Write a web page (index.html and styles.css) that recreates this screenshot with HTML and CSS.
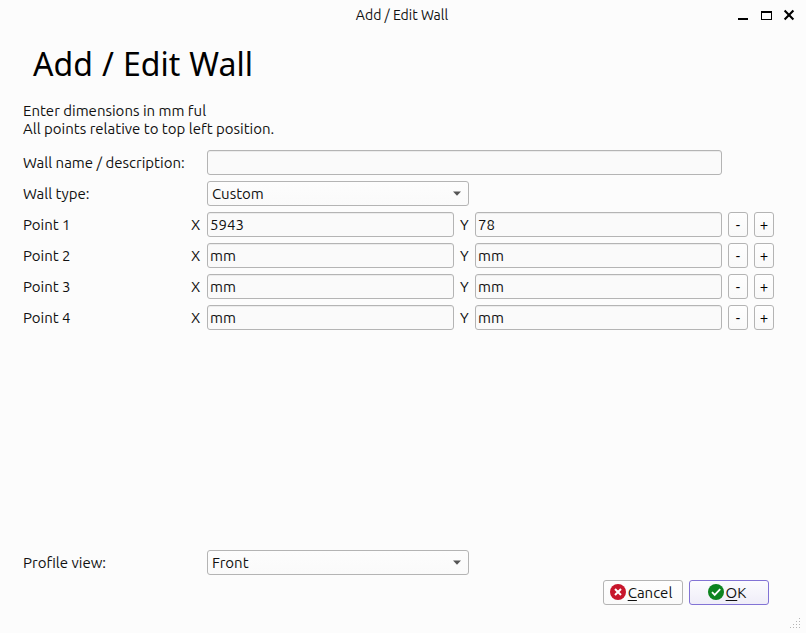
FILE: index.html
```html
<!DOCTYPE html>
<html lang="en">
<head>
<meta charset="utf-8">
<title>Add / Edit Wall</title>
<link rel="stylesheet" href="styles.css">
</head>
<body>
<div class="window">
  <header class="titlebar">
    <span class="caption">Add / Edit Wall</span>
    <svg class="controls" width="60" height="30" viewBox="0 0 60 30">
      <path d="M2 18h10v2H2z"/>
      <path fill-rule="evenodd" d="M25 11h11v9H25zM26 13v6h9v-6z"/>
      <path d="M48.6 10.6l8.8 8.8M57.4 10.6l-8.8 8.8" stroke="#000" stroke-width="2.1"/>
    </svg>
  </header>
  <h1 class="heading">Add / Edit Wall</h1>
  <div class="intro"><p>Enter dimensions in mm ful</p><p>All points relative to top left position.</p></div>
  <main class="form">
    <div class="row"><span class="label wide">Wall name / description:</span><div class="field long"></div></div>
    <div class="row"><span class="label wide">Wall type:</span><div class="combo"><span>Custom</span><svg class="arrow" width="8" height="5" viewBox="0 0 8 5"><path d="M0 .5h8L4 4.7z"/></svg></div></div>
    <div class="row"><span class="label">Point 1</span><span class="axis x">X</span><div class="field">5943</div><span class="axis y">Y</span><div class="field">78</div><button class="step">-</button><button class="step">+</button></div>
    <div class="row"><span class="label">Point 2</span><span class="axis x">X</span><div class="field">mm</div><span class="axis y">Y</span><div class="field">mm</div><button class="step">-</button><button class="step">+</button></div>
    <div class="row"><span class="label">Point 3</span><span class="axis x">X</span><div class="field">mm</div><span class="axis y">Y</span><div class="field">mm</div><button class="step">-</button><button class="step">+</button></div>
    <div class="row"><span class="label">Point 4</span><span class="axis x">X</span><div class="field">mm</div><span class="axis y">Y</span><div class="field">mm</div><button class="step">-</button><button class="step">+</button></div>
  </main>
  <div class="row profile"><span class="label wide">Profile view:</span><div class="combo"><span>Front</span><svg class="arrow" width="8" height="5" viewBox="0 0 8 5"><path d="M0 .5h8L4 4.7z"/></svg></div></div>
  <footer class="actions">
    <button class="action"><svg class="icon" width="16" height="16" viewBox="0 0 16 16"><circle cx="8" cy="8" r="8" fill="#c7162b"/><path d="M5 5l6 6M11 5l-6 6" stroke="#fff" stroke-width="2"/></svg><span><span class="key">C</span>ancel</span></button>
    <button class="action primary"><svg class="icon" width="16" height="16" viewBox="0 0 16 16"><circle cx="8" cy="8" r="8" fill="#0e8420"/><path d="M4 8.2l2.7 2.7L12.2 5.2" fill="none" stroke="#fff" stroke-width="1.8"/></svg><span><span class="key">O</span>K</span></button>
  </footer>
  <svg class="grip" width="11" height="11" viewBox="0 0 11 11"><path d="M9 0h1v1H9zM6 3h1v1H6zM9 3h1v1H9zM3 6h1v1H3zM6 6h1v1H6zM9 6h1v1H9zM0 9h1v1H0zM3 9h1v1H3zM6 9h1v1H6zM9 9h1v1H9z"/></svg>
</div>
</body>
</html>
```
FILE: styles.css
```css
* { box-sizing: border-box; }
body { margin: 0; background: #fcfcfc; color: #111; font: 15px/18px Ubuntu, "Noto Sans", sans-serif; }
.window { position: relative; width: 806px; height: 633px; display: flex; flex-direction: column; overflow: hidden; white-space: nowrap; }
.titlebar { height: 30px; display: grid; grid-template-columns: 1fr auto 1fr; align-items: center; }
.caption { grid-column: 2; font-size: 14px; margin-left: -2px; }
.controls { justify-self: end; margin-right: 10px; }
.heading { margin: 12px 0 0 33px; height: 44px; font: 400 32px/44px "Noto Sans", sans-serif; word-spacing: 0.8px; color: #000; }
.intro { margin: 16px 0 0 23px; }
.intro p { margin: 0; height: 18px; }
.form { display: flex; flex-direction: column; gap: 6px; margin-top: 12px; }
.row { display: flex; height: 25px; padding-left: 23px; align-items: center; }
.label { width: 168px; }
.label.wide { width: 184px; }
.axis.x { width: 16px; }
.axis.y { width: 21px; padding-left: 6px; }
.field, .combo, .step, .action { height: 25px; border: 1px solid #b4b4b4; border-radius: 3px; }
.field { width: 247px; padding: 0 2px; line-height: 24px; background: #fafafa; box-shadow: inset 0 1px #ececec; }
.field.long { width: 515px; }
.combo { width: 262px; padding: 0 7px 0 4px; display: flex; align-items: center; justify-content: space-between; background: linear-gradient(#fdfdfd, #fafafa); }
.arrow { fill: #555; }
.step { width: 20px; margin-left: 6px; padding: 0; font: inherit; color: #000; background: linear-gradient(#fefefe, #f9f9f9); }
.profile { margin-top: 220px; flex: none; }
.actions { display: flex; gap: 6px; margin: 5px 0 0 603px; }
.action { width: 80px; padding: 0 4px 0 0; display: flex; align-items: center; justify-content: center; gap: 2px; font: inherit; color: #111; background: linear-gradient(#fefefe, #fafafa); }
.icon { margin-bottom: 1px; }
.primary { border-color: #8273d5; background: linear-gradient(#fcfcfe, #efedf8); }
.key { text-decoration: underline; text-decoration-thickness: 1px; text-underline-offset: 2px; text-decoration-skip-ink: none; }
.grip { position: absolute; right: 5px; bottom: 4px; fill: #b5b5b5; }
```
